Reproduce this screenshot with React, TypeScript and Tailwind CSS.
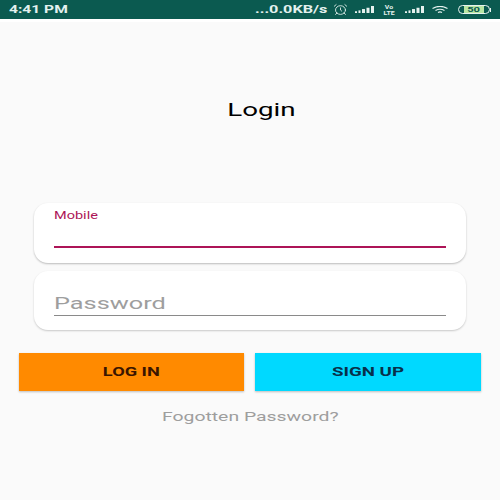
import { AlarmClock } from 'lucide-react';

function SignalBars() {
  return (
    <svg width="19" height="7" viewBox="0 0 19 8" preserveAspectRatio="none" fill="#e6f2ef">
      <rect x="0" y="6" width="2" height="2" />
      <rect x="3.500" y="5" width="2" height="3" />
      <rect x="7" y="3.500" width="3" height="4.500" />
      <rect x="11.500" y="2" width="3" height="6" />
      <rect x="16" y="0" width="3" height="8" />
    </svg>
  );
}

function WifiIcon() {
  return (
    <svg width="16" height="8" viewBox="0 0 16 8" fill="none" stroke="#e6f2ef" strokeWidth="1.1">
      <path d="M0.500 2.500c4.500-2.600 10.500-2.600 15 0" />
      <path d="M3.500 4.500c2.800-1.500 6.200-1.500 9 0" />
      <path d="M6 6.500c1.200-.7 2.800-.7 4 0" />
    </svg>
  );
}

function Battery() {
  return (
    <div className="flex items-center">
      <div className="flex h-[9px] w-[32px] items-center justify-center overflow-hidden rounded-full border border-[#e6f2ef] bg-[linear-gradient(90deg,#0b5a50_0,#0b5a50_5px,#b9e6a4_5px,#b9e6a4_25px,#0b5a50_25px)]">
        <span className="inline-block scale-x-[1.4] text-[8px] leading-none font-bold text-[#0b5a50]">50</span>
      </div>
      <div className="h-[4px] w-[1px] bg-[#e6f2ef]" />
    </div>
  );
}

function StatusBar() {
  return (
    <div className="flex h-[19px] items-center justify-between bg-[#0b5a50] pr-[9px] pl-[9px] text-[#e3f1ee]">
      <span className="inline-block origin-left scale-x-[1.56] text-[10px] font-bold whitespace-nowrap">4:41 PM</span>
      <div className="flex items-center">
        <span className="inline-block w-[76px] origin-left scale-x-[1.62] text-[10px] font-bold whitespace-nowrap">...0.0KB/s</span>
        <AlarmClock size={13} strokeWidth={1.5} className="ml-[3px] scale-x-[1.15]" />
        <div className="ml-[8px] flex"><SignalBars /></div>
        <div className="ml-[8px] flex w-[14px] scale-x-[1.15] flex-col items-center text-[6px] leading-[6px] font-bold">
          <span>Vo</span>
          <span>LTE</span>
        </div>
        <div className="ml-[9px] flex"><SignalBars /></div>
        <div className="ml-[8px] flex"><WifiIcon /></div>
        <div className="ml-[10px]"><Battery /></div>
      </div>
    </div>
  );
}

export default function App() {
  return (
    <div className="flex h-[500px] w-[500px] flex-col overflow-hidden bg-[#fafafa] font-['Roboto','Liberation_Sans',sans-serif]">
      <StatusBar />
      <div className="h-[3px] bg-white" />

      <h1 className="mt-[76px] pl-[22px] text-center text-[19px] leading-[24px] font-normal text-black">
        <span className="inline-block scale-x-[1.46]">Login</span>
      </h1>

      {/* Inputs */}
      <div className="mt-[81px] flex flex-col gap-[8px] px-[34px]">
        <div className="h-[60px] rounded-[14px] bg-white px-[20px] pt-[7px] shadow-[0_1px_2px_rgba(0,0,0,0.25)]">
          <div className="origin-left scale-x-[1.32] text-[11px] leading-[12px] text-[#ad1457]">Mobile</div>
          <div className="mt-[24px] h-[2px] bg-[#ad1457]" />
        </div>
        <div className="h-[59px] rounded-[14px] bg-white px-[20px] pt-[21px] shadow-[0_1px_2px_rgba(0,0,0,0.2)]">
          <div className="origin-left scale-x-[1.49] text-[17px] leading-[22px] text-[#9e9e9e]">Password</div>
          <div className="mt-[1px] h-[1px] bg-[#8a8a8a]" />
        </div>
      </div>

      {/* Buttons */}
      <div className="mt-[23px] flex gap-[11px] pl-[19px]">
        <button className="h-[38px] w-[225px] bg-[#ff8a00] text-[13px] font-bold text-[#3a1500] shadow-[0_1px_2px_rgba(0,0,0,0.25)]">
          <span className="inline-block scale-x-[1.4]">LOG IN</span>
        </button>
        <button className="h-[38px] w-[226px] bg-[#00d9ff] text-[13px] font-bold text-[#08304a] shadow-[0_1px_2px_rgba(0,0,0,0.25)]">
          <span className="inline-block scale-x-[1.44]">SIGN UP</span>
        </button>
      </div>

      <div className="mt-[18px] text-center text-[13px] leading-[16px] text-[#9e9e9e]">
        <span className="inline-block scale-x-[1.49]">Fogotten Password?</span>
      </div>
    </div>
  );
}
